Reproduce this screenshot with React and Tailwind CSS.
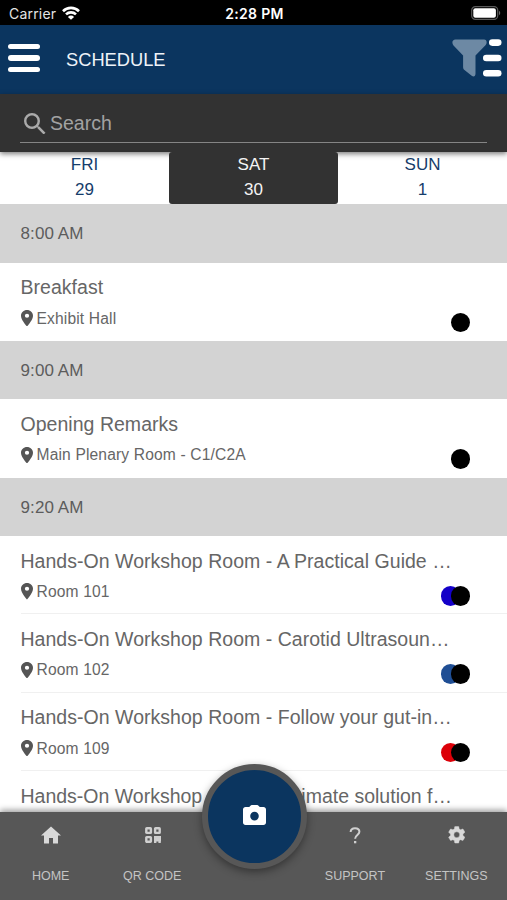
import React from "react";

const Pin = () => (
  <svg className="h-[16.5px] w-[12px] shrink-0" viewBox="5 2 14 20" preserveAspectRatio="none" fill="#555">
    <path d="M12 2C8.13 2 5 5.13 5 9c0 5.25 7 13 7 13s7-7.75 7-13c0-3.87-3.13-7-7-7zm0 9.5a2.5 2.5 0 1 1 0-5 2.5 2.5 0 0 1 0 5z" />
  </svg>
);

function TimeBand({ children }) {
  return (
    <div className="flex h-[58.5px] shrink-0 items-center bg-[#d3d3d3] pl-[20.5px] text-[17px] text-[#5c5c5c]">
      <span className="pt-px tracking-[0.1px]">{children}</span>
    </div>
  );
}

function Session({ title, room, dots, line }) {
  return (
    <div className="flex h-[78.25px] shrink-0 pl-[20.5px]">
      <div className={"flex flex-1 border-b " + (line ? "border-[#f0f0f0]" : "border-transparent")}>
        <div className="flex w-[432px] flex-col">
          <div className="mt-[12.5px] h-6 whitespace-nowrap text-[19.5px] leading-6 tracking-[0.03px] text-[#666]">{title}</div>
          <div className="mt-[9px] flex h-5 items-center gap-[4px]">
            <Pin />
            <span className="whitespace-nowrap pt-px text-[15.6px] leading-5 tracking-[0.15px] text-[#666]">{room}</span>
          </div>
        </div>
        <div className="-ml-[33px] mt-[50px] flex w-[50.5px] justify-end">{dots}</div>
      </div>
    </div>
  );
}

const BlackDot = () => <span className="h-[19.5px] w-[19.5px] rounded-full bg-black" />;

function NavItem({ label, children }) {
  return (
    <div className="flex flex-1 flex-col items-center">
      <div className="mt-[11px] flex h-6 items-center justify-center">{children}</div>
      <span className="mt-[21px] whitespace-nowrap text-[12.5px] leading-4 text-[#c4c4c4]">{label}</span>
    </div>
  );
}

function Day({ name, date, active }) {
  return (
    <div
      className={
        "flex flex-1 flex-col items-center rounded-[3px] text-[17px] leading-[25px] " +
        (active ? "z-20 bg-[#323232] text-[#f4f4f4]" : "text-[#163d6b]")
      }
    >
      <span>{name}</span>
      <span>{date}</span>
    </div>
  );
}

export default function App() {
  return (
    <div className="relative flex h-[900px] w-[507px] flex-col overflow-hidden bg-white font-['Liberation_Sans',Arial,sans-serif]">
      <div className="flex h-[25px] shrink-0 items-center bg-black font-['Inter',sans-serif] text-white">
        <div className="flex flex-1 items-center gap-[6px] pl-[9px] pt-[2px]">
          <span className="text-[14px] leading-5 tracking-[0.2px] text-[#e4e4e4]">Carrier</span>
          <svg className="mb-px h-[14px] w-[18px]" viewBox="0 0 18 14" fill="none" stroke="#fff" strokeWidth="2.6">
            <path d="M1 5.2a11.4 11.4 0 0 1 16 0M4 8.4a7.2 7.2 0 0 1 10 0" />
            <path d="M9 13.8 5.9 10.9a4.4 4.4 0 0 1 6.2 0z" fill="#fff" stroke="none" />
          </svg>
        </div>
        <span className="mr-px pt-[2px] text-[14px] font-semibold leading-5 tracking-[0.3px]">2:28 PM</span>
        <div className="flex flex-1 justify-end pr-[6px]">
          <svg className="mt-px h-[14px] w-[30px]" viewBox="0 0 30 14">
            <rect x=".7" y=".7" width="26" height="12.6" rx="3.6" fill="none" stroke="#5a5a5a" strokeWidth="1.2" />
            <rect x="2.3" y="2.3" width="22.6" height="9.4" rx="2" fill="#fff" />
            <path d="M28 4.8c1.7.7 1.7 3.7 0 4.4z" fill="#666" />
          </svg>
        </div>
      </div>

      <div className="z-10 flex h-[69px] shrink-0 items-center bg-[#0b355f] shadow-[0_1px_4px_rgba(0,0,0,0.5)]">
        <div className="ml-[7.5px] -mt-[3px] flex w-8 flex-col gap-[6.3px]">
          <span className="h-[5.2px] rounded-full bg-white" />
          <span className="h-[5.2px] rounded-full bg-white" />
          <span className="h-[5.2px] rounded-full bg-white" />
        </div>
        <span className="ml-[26.5px] flex-1 text-[18.3px] leading-6 text-[#eef3f8]">SCHEDULE</span>
        <svg className="-mt-[3px] mr-[5.5px] h-[38px] w-[50px]" viewBox="0 0 50 38">
          <path
            d="M3.5 0.5h28.5c3 0 3.3 3.3 1.7 5.6L23.5 16.4V34.5c0 2.8-1.8 3.8-3.8 2.2l-7.2-5.6c-1-.8-1.4-1.6-1.4-2.8V16.4L1.5 6.6C-.5 4 .2.5 3.5.5z"
            fill="#6d89a4"
          />
          <rect x="37" y="0.3" width="12.5" height="6.6" rx="3.3" fill="#fff" />
          <rect x="31" y="15.7" width="18.5" height="6.6" rx="3.3" fill="#fff" />
          <rect x="31" y="31" width="18.5" height="6.6" rx="3.3" fill="#fff" />
        </svg>
      </div>

      <div className="z-10 flex h-[58px] shrink-0 flex-col bg-[#323232] px-5 shadow-[0_2px_5px_rgba(0,0,0,0.5)]">
        <div className="flex h-[48.5px] items-center border-b-[1.5px] border-[#858585] pt-[11px] text-[19.5px] text-[#a2a2a2]">
          <svg className="ml-[4px] h-[21.5px] w-[21.5px]" viewBox="3 3 17.5 17.5" fill="#aaa">
            <path d="M15.5 14h-.79l-.28-.27A6.47 6.47 0 0 0 16 9.5 6.5 6.5 0 1 0 9.5 16c1.61 0 3.09-.59 4.23-1.57l.27.28v.79l5 4.99L20.49 19l-4.99-5zm-6 0C7.01 14 5 11.99 5 9.5S7.01 5 9.5 5 14 7.01 14 9.5 11.99 14 9.5 14z" />
          </svg>
          <span className="ml-[4.5px] leading-6">Search</span>
        </div>
      </div>

      <div className="flex h-[52px] shrink-0">
        <Day name="FRI" date="29" />
        <Day name="SAT" date="30" active />
        <Day name="SUN" date="1" />
      </div>

      <TimeBand>8:00 AM</TimeBand>
      <Session title="Breakfast" room="Exhibit Hall" dots={<BlackDot />} />
      <TimeBand>9:00 AM</TimeBand>
      <Session title="Opening Remarks" room="Main Plenary Room - C1/C2A" dots={<BlackDot />} />
      <TimeBand>9:20 AM</TimeBand>
      <Session
        line
        title="Hands-On Workshop Room - A Practical Guide …"
        room="Room 101"
        dots={<><span className="-mr-[9.7px] h-[19.5px] w-[19.5px] rounded-full bg-[#1400c8]" /><BlackDot /></>}
      />
      <Session
        line
        title="Hands-On Workshop Room - Carotid Ultrasoun…"
        room="Room 102"
        dots={<><span className="-mr-[9.7px] h-[19.5px] w-[19.5px] rounded-full bg-[#1f4e94]" /><BlackDot /></>}
      />
      <Session
        line
        title="Hands-On Workshop Room - Follow your gut-in…"
        room="Room 109"
        dots={<><span className="-mr-[9.7px] h-[19.5px] w-[19.5px] rounded-full bg-[#dc0008]" /><BlackDot /></>}
      />
      <div className="flex shrink-0 justify-between pl-[20.5px] pr-[55px] pt-[13px] text-[19.5px] leading-6 text-[#666]">
        <span>Hands-On Workshop</span>
        <span>imate solution f…</span>
      </div>

      <div className="absolute inset-x-0 bottom-0 flex h-[88px] bg-[#575757] shadow-[0_-2px_6px_rgba(0,0,0,0.4)]">
        <NavItem label="HOME">
          <svg className="h-[18px] w-[20px]" viewBox="2 3 20 17" fill="#d9d9d9">
            <path d="M10 20v-5.5h4v5.5h5v-8h3L12 3 2 12h3v8z" />
          </svg>
        </NavItem>
        <NavItem label="QR CODE">
          <svg className="ml-px h-4 w-4" viewBox="0 0 16 16" fill="none" stroke="#d0d0d0" strokeWidth="2.4">
            <rect x="1.3" y="1.3" width="4.6" height="4.6" rx=".5" />
            <rect x="10.1" y="1.3" width="4.6" height="4.6" rx=".5" />
            <rect x="1.3" y="10.1" width="4.6" height="4.6" rx=".5" />
            <path d="M10.2 16V10.2h2.3v3.2h2.3V9M14.6 14v2" />
          </svg>
        </NavItem>
        <div className="flex-1" />
        <NavItem label="SUPPORT">
          <svg className="h-[17px] w-[12px]" viewBox="0 0 12 17" fill="none" stroke="#d0d0d0" strokeWidth="2">
            <path d="M1.6 5C1.8 2.6 3.6 1.3 6 1.3c2.5 0 4.4 1.4 4.4 3.5 0 3-4.3 3.4-4.3 6.9" />
            <path d="M5 14h2.3v2.3H5z" fill="#d0d0d0" stroke="none" />
          </svg>
        </NavItem>
        <NavItem label="SETTINGS">
          <svg className="h-[17.5px] w-[17.5px]" viewBox="1.5 1.5 21 21" fill="#d9d9d9" stroke="#d9d9d9" strokeWidth="0.5">
            <path d="M19.43 12.98c.04-.32.07-.64.07-.98s-.03-.66-.07-.98l2.11-1.65c.19-.15.24-.42.12-.64l-2-3.46c-.12-.22-.39-.3-.61-.22l-2.49 1c-.52-.4-1.08-.73-1.69-.98l-.38-2.65A.49.49 0 0 0 14 2h-4c-.25 0-.46.18-.49.42l-.38 2.65c-.61.25-1.17.59-1.69.98l-2.49-1c-.23-.09-.49 0-.61.22l-2 3.46c-.13.22-.07.49.12.64l2.11 1.65c-.04.32-.07.65-.07.98s.03.66.07.98l-2.11 1.65c-.19.15-.24.42-.12.64l2 3.46c.12.22.39.3.61.22l2.49-1c.52.4 1.08.73 1.69.98l.38 2.65c.03.24.24.42.49.42h4c.25 0 .46-.18.49-.42l.38-2.65c.61-.25 1.17-.59 1.69-.98l2.49 1c.23.09.49 0 .61-.22l2-3.46c.12-.22.07-.49-.12-.64l-2.11-1.65zM12 15.5a3.5 3.5 0 1 1 0-7 3.5 3.5 0 0 1 0 7z" />
          </svg>
        </NavItem>
      </div>

      <div className="absolute left-[201.5px] top-[763.5px] flex h-[105px] w-[105px] items-center justify-center rounded-full border-[6px] border-[#575757] bg-[#0b355f] shadow-[0_3px_9px_rgba(0,0,0,0.4)]">
        <svg className="-mt-[2px] h-[20px] w-[23px]" viewBox="0 0 23 20" fill="#fff">
          <path
            fillRule="evenodd"
            d="M7.5.8C7.8.3 8.2 0 8.8 0h5.4c.6 0 1 .3 1.3.8L16.8 2H20.5c1.4 0 2.5 1 2.5 2.5v13c0 1.4-1.1 2.5-2.5 2.5h-18C1.1 20 0 18.9 0 17.5v-13C0 3 1.1 2 2.5 2H6.2zM11.5 6.8a4.3 4.3 0 1 0 0 8.6 4.3 4.3 0 0 0 0-8.6z"
          />
        </svg>
      </div>
    </div>
  );
}
